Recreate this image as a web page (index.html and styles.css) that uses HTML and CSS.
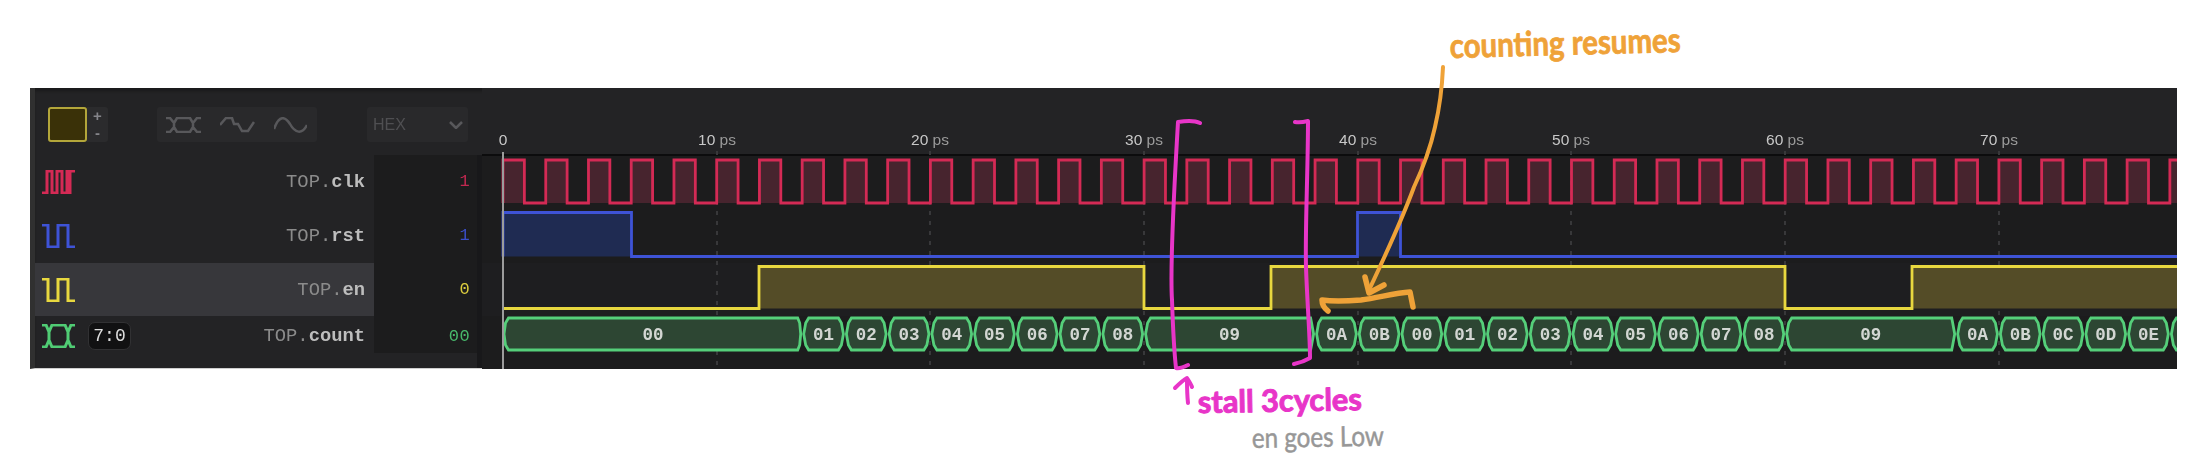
FILE: index.html
```html
<!DOCTYPE html>
<html lang="en">
<head>
<meta charset="utf-8">
<title>Waveform</title>
<link rel="stylesheet" href="styles.css">
</head>
<body>
<main class="panel">
  <section class="side">
    <header class="toolbar">
      <div class="swatch-group">
        <span class="swatch"></span>
        <span class="stepper"><span>+</span><span>-</span></span>
      </div>
      <div class="modes">
        <svg class="mode-icon" width="35" height="16" viewBox="0 0 35 16"><path d="M0 1H4L8 6V10L4 15H0M8 6L11 1H24L27 6V10L24 15H11L8 10M27 6L31 1H35M27 10L31 15H35"/></svg>
        <svg class="mode-icon" width="35" height="16" viewBox="0 0 35 16"><path d="M0 8L6 1H12L14 7H18L22 14H28L34 5"/></svg>
        <svg class="mode-icon" width="33" height="16" viewBox="0 0 33 16"><path d="M0 12C5 -2 11 -1 16 7C21 16 28 18 33 8"/></svg>
      </div>
      <div class="select">
        <span>HEX</span>
        <svg class="mode-icon" width="14" height="8" viewBox="0 0 14 8"><path d="M1 1L7 7L13 1"/></svg>
      </div>
    </header>
    <div class="rows">
      <div class="row row-tall">
        <svg class="sig-icon clk" width="33" height="24" viewBox="0 0 33 24"><path d="M0 23H5V1H10V23H15V1H20V23H25V1H28M25 23H28V1H33"/></svg>
        <span class="name"><span class="scope">TOP.</span><b>clk</b></span>
        <span class="value val-clk">1</span>
      </div>
      <div class="row row-tall">
        <svg class="sig-icon rst" width="33" height="24" viewBox="0 0 33 24"><path d="M0 1H6V23H16V1H26V23H33"/></svg>
        <span class="name"><span class="scope">TOP.</span><b>rst</b></span>
        <span class="value val-rst">1</span>
      </div>
      <div class="row row-mid row-active">
        <svg class="sig-icon en" width="33" height="24" viewBox="0 0 33 24"><path d="M0 1H6V23H16V1H26V23H33"/></svg>
        <span class="name"><span class="scope">TOP.</span><b>en</b></span>
        <span class="value val-en">0</span>
      </div>
      <div class="row row-short">
        <svg class="sig-icon count" width="33" height="24" viewBox="0 0 33 24"><path d="M0 1H4L7 8V16L4 23H0M7 8L10 1H23L26 8V16L23 23H10L7 16M26 8L29 1H33M26 16L29 23H33"/></svg>
        <span class="badge">7:0</span>
        <span class="name"><span class="scope">TOP.</span><b>count</b></span>
        <span class="value val-count">00</span>
      </div>
    </div>
  </section>

  <svg class="wave" width="1695" height="281" viewBox="482 88 1695 281">
    <defs>
      <polygon id="seg" points="1.5,334 3.5,323 6.5,318 36.2,318 39.2,323 41.2,334 39.2,345 36.2,350 6.5,350 3.5,345"/>
    </defs>
    <rect class="ruler-bg" x="482" y="88" width="1695" height="67"/>
    <rect class="active-bg" x="482" y="263" width="1695" height="53"/>
    <line class="axis" x1="482" y1="155" x2="2177" y2="155"/>

    <g class="labels">
      <text x="503" y="145">0</text>
      <text x="717" y="145">10 <tspan class="unit">ps</tspan></text>
      <text x="930" y="145">20 <tspan class="unit">ps</tspan></text>
      <text x="1144" y="145">30 <tspan class="unit">ps</tspan></text>
      <text x="1358" y="145">40 <tspan class="unit">ps</tspan></text>
      <text x="1571" y="145">50 <tspan class="unit">ps</tspan></text>
      <text x="1785" y="145">60 <tspan class="unit">ps</tspan></text>
      <text x="1999" y="145">70 <tspan class="unit">ps</tspan></text>
    </g>
    <g class="ticks">
      <path d="M717 151V369M930 151V369M1144 151V369M1358 151V369M1571 151V369M1785 151V369M1999 151V369"/>
    </g>

    <path class="trace t-clk" d="M503 203V160h21.37V203h21.37V160h21.37V203h21.37V160h21.37V203h21.37V160h21.37V203h21.37V160h21.37V203h21.37V160h21.37V203h21.37V160h21.37V203h21.37V160h21.37V203h21.37V160h21.37V203h21.37V160h21.37V203h21.37V160h21.37V203h21.37V160h21.37V203h21.37V160h21.37V203h21.37V160h21.37V203h21.37V160h21.37V203h21.37V160h21.37V203h21.37V160h21.37V203h21.37V160h21.37V203h21.37V160h21.37V203h21.37V160h21.37V203h21.37V160h21.37V203h21.37V160h21.37V203h21.37V160h21.37V203h21.37V160h21.37V203h21.37V160h21.37V203h21.37V160h21.37V203h21.37V160h21.37V203h21.37V160h21.37V203h21.37V160h21.37V203h21.37V160h21.37V203h21.37V160h21.37V203h21.37V160h21.37V203h21.37V160h21.37V203h21.37V160h21.37V203h21.37V160h21.37V203h21.37V160h21.37V203h21.37V160h21.37V203h21.37V160h21.37V203h21.37V160h21.37V203h21.37V160h21.37V203"/>
    <path class="trace t-rst" d="M503 256.5V212.5H631.5V256.5H1357.5V212.5H1400.5V256.5H2190"/>
    <path class="trace t-en" d="M503 308.5H759V266.5H1144V308.5H1271V266.5H1785V308.5H1912V266.5H2190V308.5"/>

    <g class="bus">
      <polygon points="504,334 505.5,323 508.5,318 797.7,318 799.7,323 800.7,334 799.7,345 797.7,350 508.5,350 505.5,345"/>
      <use href="#seg" x="802.2"/><use href="#seg" x="844.9"/><use href="#seg" x="887.7"/><use href="#seg" x="930.4"/>
      <use href="#seg" x="973.1"/><use href="#seg" x="1015.9"/><use href="#seg" x="1058.6"/><use href="#seg" x="1101.4"/>
      <polygon points="1145.6,334 1147.6,323 1150.6,318 1310.6,318 1311.6,323 1313.6,334 1311.6,345 1310.6,350 1150.6,350 1147.6,345"/>
      <use href="#seg" x="1315.1"/><use href="#seg" x="1357.8"/><use href="#seg" x="1400.5"/><use href="#seg" x="1443.3"/>
      <use href="#seg" x="1486"/><use href="#seg" x="1528.8"/><use href="#seg" x="1571.5"/><use href="#seg" x="1614.2"/>
      <use href="#seg" x="1657"/><use href="#seg" x="1699.7"/><use href="#seg" x="1742.5"/>
      <polygon points="1786.7,334 1788.7,323 1791.7,318 1951.7,318 1952.7,323 1954.7,334 1952.7,345 1951.7,350 1791.7,350 1788.7,345"/>
      <use href="#seg" x="1956.2"/><use href="#seg" x="1998.9"/><use href="#seg" x="2041.6"/><use href="#seg" x="2084.4"/>
      <use href="#seg" x="2127.1"/><use href="#seg" x="2169.9"/>
    </g>
    <g class="bus-text">
      <text x="653" y="340">00</text>
      <text x="823.6" y="340">01</text><text x="866.3" y="340">02</text><text x="909" y="340">03</text><text x="951.8" y="340">04</text>
      <text x="994.5" y="340">05</text><text x="1037.3" y="340">06</text><text x="1080" y="340">07</text><text x="1122.8" y="340">08</text>
      <text x="1229.6" y="340">09</text>
      <text x="1336.5" y="340">0A</text><text x="1379.2" y="340">0B</text><text x="1421.9" y="340">00</text><text x="1464.7" y="340">01</text>
      <text x="1507.4" y="340">02</text><text x="1550.2" y="340">03</text><text x="1592.9" y="340">04</text><text x="1635.6" y="340">05</text>
      <text x="1678.4" y="340">06</text><text x="1721.1" y="340">07</text><text x="1763.9" y="340">08</text>
      <text x="1870.7" y="340">09</text>
      <text x="1977.6" y="340">0A</text><text x="2020.3" y="340">0B</text><text x="2063" y="340">0C</text><text x="2105.8" y="340">0D</text><text x="2148.5" y="340">0E</text>
    </g>
    <line class="cursor" x1="503" y1="152" x2="503" y2="369"/>
  </svg>
</main>

<svg class="notes" width="2201" height="465" viewBox="0 0 2201 465">
  <g class="ink ink-magenta">
    <path d="M1200 123C1194 120 1184 121 1178 122C1174 190 1170 270 1172 300C1173 330 1174 350 1176 368C1180 369 1184 367 1188 365"/>
    <path d="M1295 122C1300 123 1304 122 1308 121C1308 170 1305 230 1306 267C1307 300 1310 335 1310 358C1305 361 1299 363 1294 364"/>
    <path d="M1188 403C1187 394 1187 386 1187 379M1175 388C1179 384 1183 380 1187 378C1189 381 1191 384 1192 387"/>
  </g>
  <g class="ink ink-orange">
    <path d="M1443 67C1442 90 1439 110 1435 127C1430 150 1422 170 1414 187C1400 225 1384 258 1369 290"/>
    <path class="ink-heavy" d="M1365 277L1369 293L1384 285"/>
    <path class="ink-heavy" d="M1328 311C1324 308 1322 304 1322 300C1335 302 1349 301 1361 300C1378 298 1394 293 1410 292C1411 297 1412 302 1413 307"/>
  </g>
  <text class="note note-orange" x="1450" y="58" textLength="231" lengthAdjust="spacingAndGlyphs" transform="rotate(-1.5 1450 58)">counting resumes</text>
  <text class="note note-magenta" x="1198" y="413" textLength="164" lengthAdjust="spacingAndGlyphs" transform="rotate(-1 1198 413)">stall 3cycles</text>
  <text class="note note-grey" x="1252" y="448" textLength="132" lengthAdjust="spacingAndGlyphs" transform="rotate(-1 1252 448)">en goes Low</text>
</svg>
</body>
</html>
```
FILE: styles.css
```css
* { box-sizing: border-box; }

html, body { margin: 0; background: #fff; }

body {
  width: 2201px;
  height: 465px;
  padding: 88px 24px 0 30px;
  overflow: hidden;
  position: relative;
}

.panel {
  display: flex;
  width: 2147px;
  height: 281px;
  background: #232325;
  border-left: 5px solid #303030;
  border-bottom: 1px solid #cfcfcf;
  box-shadow: inset 0 4px 3px -1px #1a1a1b;
  filter: blur(.7px);
}

.side {
  width: 447px;
  flex: none;
  display: flex;
  flex-direction: column;
}

/* toolbar */
.toolbar {
  height: 67px;
  flex: none;
  padding: 19px 0 0 13px;
  display: flex;
  align-items: flex-start;
}

.swatch-group { display: flex; width: 109px; }

.swatch {
  width: 39px;
  height: 35px;
  background: #3a3108;
  border: 2px solid #b3a63a;
  border-radius: 3px;
}

.stepper {
  width: 21px;
  height: 35px;
  background: #2b2b2d;
  border-radius: 0 3px 3px 0;
  color: #85858a;
  font: bold 15px/17px "Liberation Sans", sans-serif;
  text-align: center;
  display: flex;
  flex-direction: column;
}

.modes {
  width: 160px;
  height: 35px;
  margin-right: 50px;
  padding: 0 10px 0 9px;
  background: #29292b;
  border-radius: 3px;
  display: flex;
  align-items: center;
  justify-content: space-between;
}

.mode-icon { fill: none; stroke: #58585b; stroke-width: 2.5; display: block; }

.select {
  width: 101px;
  height: 35px;
  padding: 0 5px 0 6px;
  background: #29292b;
  border-radius: 3px;
  color: #4f4f52;
  font: 16px "Liberation Sans", sans-serif;
  display: flex;
  align-items: center;
  justify-content: space-between;
}

/* signal rows */
.rows {
  flex: 1;
  border-right: 5px solid #18181a;
}

.row {
  display: flex;
  align-items: center;
  padding-left: 7px;
}

.row-tall { height: 54px; }
.row-mid { height: 53px; }
.row-short { height: 37px; }
.row-active { background: #37373b; }

.sig-icon { fill: none; stroke-width: 3; flex: none; }
.clk { stroke: #d42a55; }
.rst { stroke: #3e53d6; }
.en { stroke: #e8d83f; }
.count { stroke: #50cc74; }

.badge {
  width: 43px;
  height: 28px;
  margin-left: 13px;
  background: #111112;
  border: 1px solid #313133;
  border-radius: 7px;
  color: #dcdcdc;
  font: 18px/26px "Liberation Mono", monospace;
  text-align: center;
}

.name {
  flex: 1;
  padding-right: 9px;
  text-align: right;
  font: 18.8px "Liberation Mono", monospace;
  color: #8b8b8b;
}

.name b { color: #bdbdbd; }

.value {
  width: 103px;
  height: 100%;
  flex: none;
  padding-right: 7px;
  background: #1c1c1d;
  text-align: right;
  font: 17px/54px "Liberation Mono", monospace;
  letter-spacing: .4px;
}

.row-mid .value { line-height: 53px; }
.row-short .value { line-height: 42px; }
.row-short .name { padding-top: 3px; }
.row-short .badge { margin-top: 3px; }
.row-short .sig-icon { margin-top: 3px; }

.val-clk { color: #c22850; }
.val-rst { color: #3a4ec8; }
.val-en { color: #dccd3e; }
.val-count { color: #48b86b; }

/* waveform */
.wave {
  flex: 1;
  display: block;
  background: #1c1c1d;
}

.ruler-bg { fill: #232325; }
.active-bg { fill: #1e1e20; }
.axis { stroke: #0c0c0d; stroke-width: 2; }

.labels text {
  font: 15.5px "Liberation Sans", sans-serif;
  fill: #c8c8c8;
  text-anchor: middle;
}

.labels .unit { fill: #9a9a9a; }

.ticks path {
  fill: none;
  stroke: #38383a;
  stroke-width: 2;
  stroke-dasharray: 4 6;
}

.trace { stroke-width: 2.8; }
.t-clk { stroke: #d42a55; fill: #4a252f; fill-opacity: .95; }
.t-rst { stroke: #3e53d6; fill: #1f2b52; }
.t-en { stroke: #e8d83f; fill: #544c27; }

.bus polygon, .bus use {
  fill: #2d4633;
  stroke: #55cf7a;
  stroke-width: 2.8;
}

.bus-text text {
  font: bold 17.5px "Liberation Mono", monospace;
  fill: #d2d6d2;
  text-anchor: middle;
}

.cursor { stroke: #9c9c9c; stroke-width: 2; }

/* hand-drawn annotations over the waveform */
.notes {
  position: absolute;
  left: 0;
  top: 0;
  pointer-events: none;
}

.ink { fill: none; stroke-width: 4; stroke-linecap: round; stroke-linejoin: round; }
.ink-magenta { stroke: #e835c8; }
.ink-orange { stroke: #efa238; }
.ink-heavy { stroke-width: 5.5; }

.note { font-family: "Lato", sans-serif; stroke-linejoin: round; }
.note-orange { font-size: 34px; font-weight: 700; fill: #efa238; stroke: #efa238; stroke-width: .8; }
.note-magenta { font-size: 31px; font-weight: 700; fill: #e835c8; stroke: #e835c8; stroke-width: 1; }
.note-grey { font-size: 28px; font-weight: 400; fill: #979797; stroke: #979797; stroke-width: .5; }
```
